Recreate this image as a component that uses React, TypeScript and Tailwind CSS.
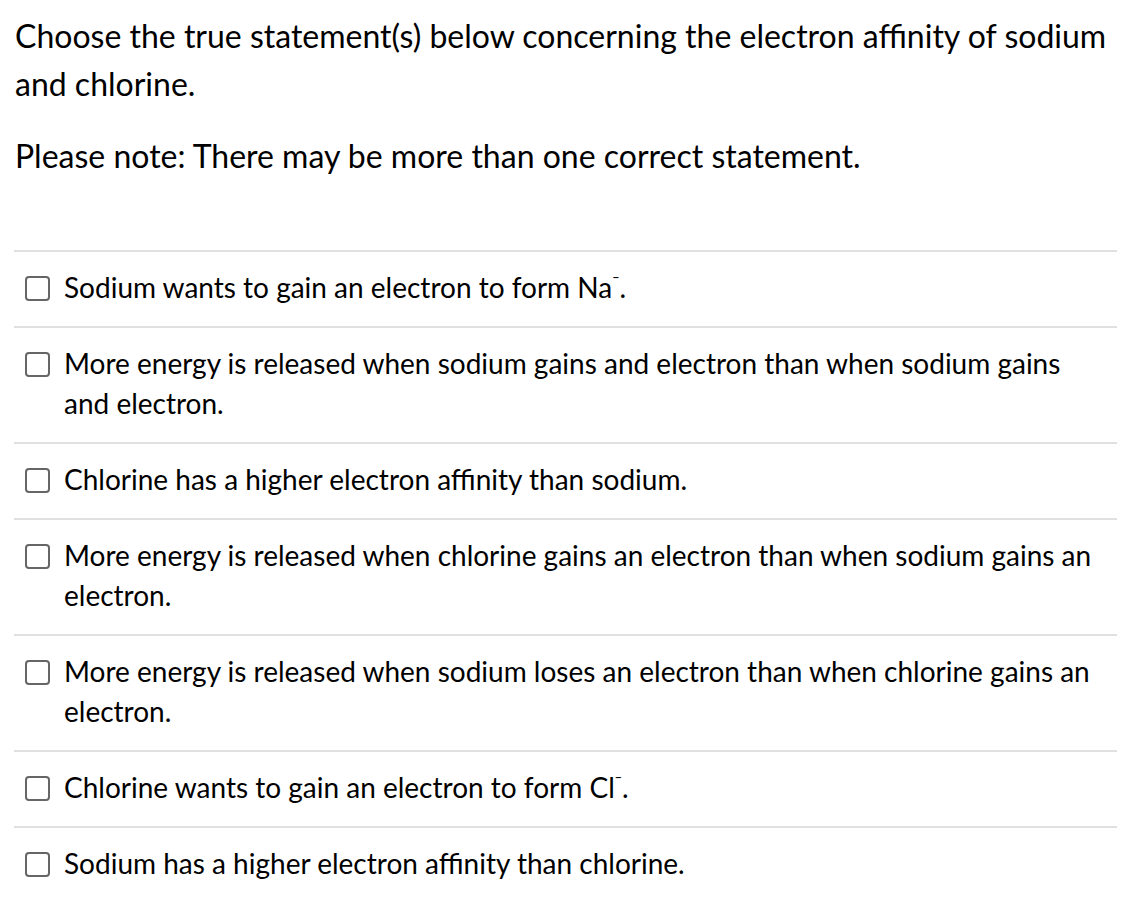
const options: { text: React.ReactNode }[] = [
  { text: <>Sodium wants to gain an electron to form Na<Sup />.</> },
  { text: 'More energy is released when sodium gains and electron than when sodium gains and electron.' },
  { text: 'Chlorine has a higher electron affinity than sodium.' },
  { text: 'More energy is released when chlorine gains an electron than when sodium gains an electron.' },
  { text: 'More energy is released when sodium loses an electron than when chlorine gains an electron.' },
  { text: <>Chlorine wants to gain an electron to form Cl<Sup />.</> },
  { text: 'Sodium has a higher electron affinity than chlorine.' },
]

// the minus sign sits up at cap height, like a small macron
function Sup() {
  return <span className="align-top text-[18px] leading-[30px]">¯</span>
}

export default function App() {
  return (
    <div className="min-h-screen bg-white text-black" style={{ fontFamily: 'Lato, "Noto Sans", sans-serif' }}>
      <div className="w-[1117px] pl-[14px] pt-3">
        <p className="pl-px text-[32px] leading-[48px]">
          Choose the true statement(s) below concerning the electron affinity of sodium and chlorine.
        </p>
        <p className="mt-6 pl-px text-[32px] leading-[48px]">
          Please note: There may be more than one correct statement.
        </p>

        <ul className="mt-[70px]">
          {options.map((o, i) => (
            <li key={i} className="flex items-start gap-[14px] border-t-2 border-[#e0e0e0] py-[17px] pl-[11px] pr-5">
              <span className="mt-[7px] h-[25px] w-[25px] shrink-0 rounded-[4px] border-2 border-[#666]" />
              <span className="-mt-[2px] mb-[2px] text-[28px] leading-[40px]">{o.text}</span>
            </li>
          ))}
        </ul>
      </div>
    </div>
  )
}
